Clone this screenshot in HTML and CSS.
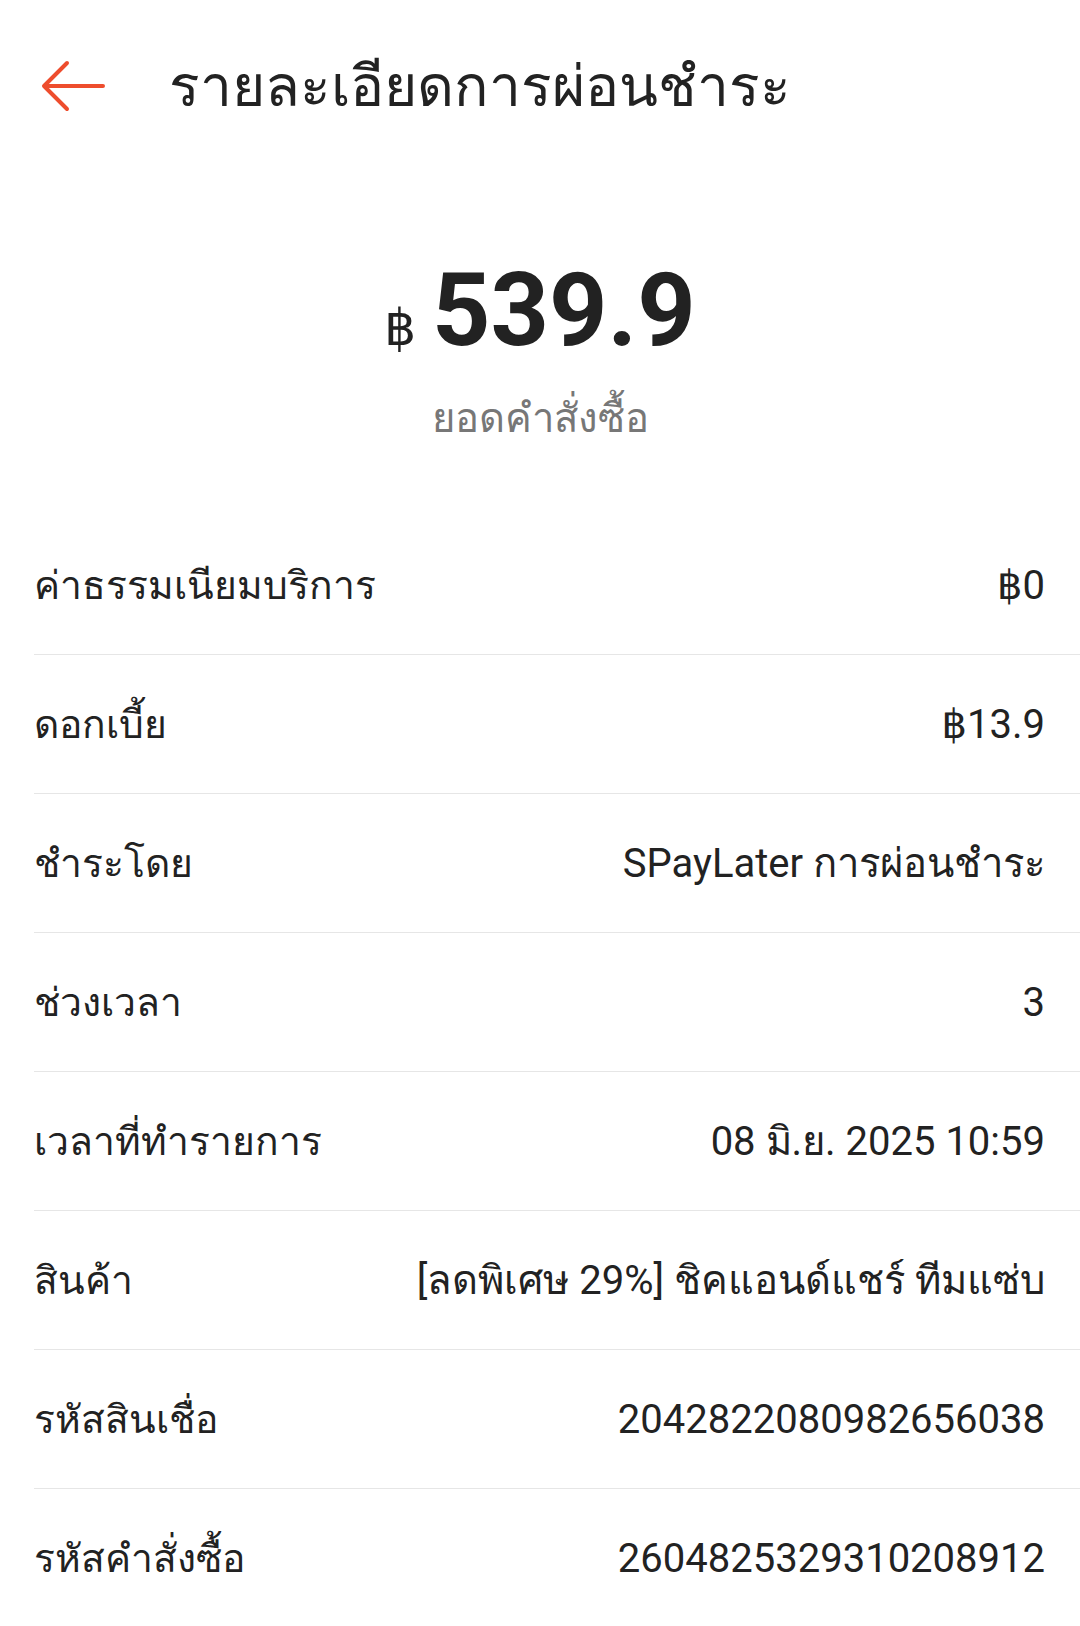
FILE: index.html
```html
<!DOCTYPE html>
<html lang="th">
<head>
<meta charset="utf-8">
<link rel="stylesheet" href="styles.css">
</head>
<body>
<div class="page">
  <header class="header">
    <svg class="back" width="64" height="52" viewBox="0 0 64 52">
      <path d="M62 26 H4 M26 3 L3 26 L26 49" fill="none" stroke="#ee4d2d" stroke-width="4" stroke-linecap="round" stroke-linejoin="round"/>
    </svg>
    <h1 class="title">รายละเอียดการผ่อนชำระ</h1>
  </header>
  <section class="summary">
    <div class="amount"><span class="cur">฿</span><span class="num">539.9</span></div>
    <div class="sub">ยอดคำสั่งซื้อ</div>
  </section>
  <div class="rows">
    <div class="row"><span class="label">ค่าธรรมเนียมบริการ</span><span class="value">฿0</span></div>
    <div class="row"><span class="label">ดอกเบี้ย</span><span class="value">฿13.9</span></div>
    <div class="row"><span class="label">ชำระโดย</span><span class="value">SPayLater การผ่อนชำระ</span></div>
    <div class="row"><span class="label">ช่วงเวลา</span><span class="value">3</span></div>
    <div class="row"><span class="label">เวลาที่ทำรายการ</span><span class="value">08 มิ.ย. 2025 10:59</span></div>
    <div class="row"><span class="label">สินค้า</span><span class="value">[ลดพิเศษ 29%] ชิคแอนด์แชร์ ทีมแซ่บ</span></div>
    <div class="row"><span class="label">รหัสสินเชื่อ</span><span class="value">2042822080982656038</span></div>
    <div class="row"><span class="label">รหัสคำสั่งซื้อ</span><span class="value">2604825329310208912</span></div>
  </div>
</div>
</body>
</html>
```

FILE: styles.css
```css
html, body {
  margin: 0;
  padding: 0;
  background: #ffffff;
}
body {
  font-family: Roboto, "Noto Sans", "DejaVu Sans", sans-serif;
  color: #222222;
}
.page {
  width: 1080px;
  height: 1626px;
  overflow: hidden;
}
.header {
  height: 172px;
  display: flex;
  align-items: center;
  padding-left: 41px;
  box-sizing: border-box;
}
.back {
  flex: none;
}
.title {
  margin: 0 0 0 64px;
  font-size: 57px;
  font-weight: 400;
  color: #222;
}
.summary {
  display: flex;
  flex-direction: column;
  align-items: center;
  padding: 78px 0 72px;
}
.amount {
  height: 120px;
  display: flex;
  align-items: baseline;
  justify-content: center;
  line-height: 120px;
}
.cur {
  font-size: 50px;
  margin-right: 16px;
}
.num {
  font-size: 102px;
  font-weight: 700;
}
.sub {
  margin-top: 24px;
  height: 50px;
  line-height: 50px;
  font-size: 40px;
  color: #777;
}
.rows {
  padding-left: 34px;
}
.row {
  height: 138px;
  display: flex;
  align-items: center;
  justify-content: space-between;
  padding-right: 35px;
  border-bottom: 1px solid #e6e6e6;
}
.label, .value {
  font-size: 40px;
  color: #222;
}
.label {
  font-size: 39px;
}
```
